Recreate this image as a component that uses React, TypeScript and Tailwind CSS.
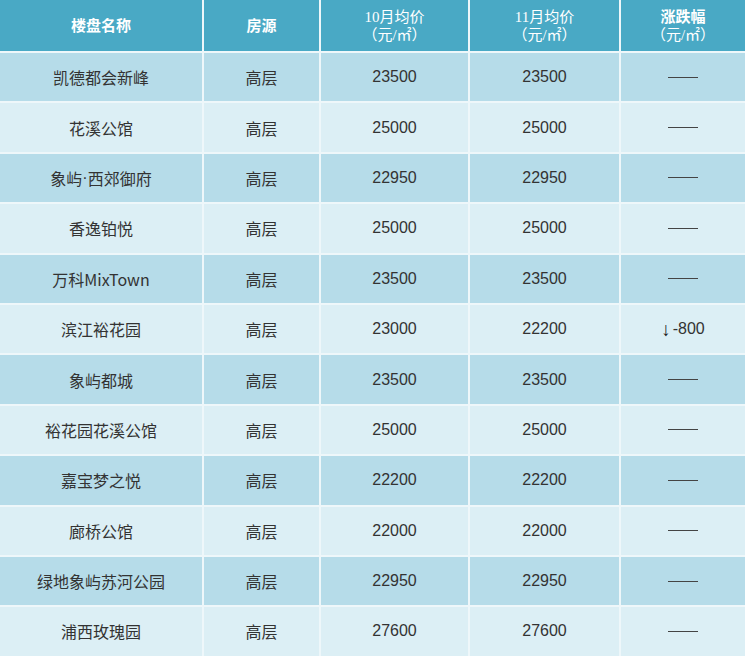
const rows = [
  { name: "凯德都会新峰", oct: "23500", nov: "23500", change: "" },
  { name: "花溪公馆", oct: "25000", nov: "25000", change: "" },
  { name: "象屿·西郊御府", oct: "22950", nov: "22950", change: "" },
  { name: "香逸铂悦", oct: "25000", nov: "25000", change: "" },
  { name: "万科MixTown", oct: "23500", nov: "23500", change: "" },
  { name: "滨江裕花园", oct: "23000", nov: "22200", change: "-800" },
  { name: "象屿都城", oct: "23500", nov: "23500", change: "" },
  { name: "裕花园花溪公馆", oct: "25000", nov: "25000", change: "" },
  { name: "嘉宝梦之悦", oct: "22200", nov: "22200", change: "" },
  { name: "廊桥公馆", oct: "22000", nov: "22000", change: "" },
  { name: "绿地象屿苏河公园", oct: "22950", nov: "22950", change: "" },
  { name: "浦西玫瑰园", oct: "27600", nov: "27600", change: "" },
];

const cell = "flex items-center justify-center h-[48.4px]";
const head = "flex items-center justify-center h-[51px] bg-[#49a9c5] text-white text-[15px]";

// names like 象屿·西郊御府 need a narrow dot, the CJK font draws it full width
function Name({ text }: { text: string }) {
  const parts = text.split("·");
  if (parts.length === 1) return <>{text}</>;
  return (
    <>
      {parts[0]}
      <span className="font-['Liberation_Sans',sans-serif]">·</span>
      {parts[1]}
    </>
  );
}

export default function App() {
  return (
    <div className="w-[745px] h-[659px] overflow-hidden bg-white font-['Noto_Sans_CJK_SC',sans-serif]">
      <div className="grid grid-cols-[202px_115px_147px_149px_1fr] gap-[2px] bg-[#eef7fa]">
        <div className={`${head} font-bold`}>楼盘名称</div>
        <div className={`${head} font-bold`}>房源</div>
        <div className={`${head} flex-col leading-[18px] font-['Liberation_Serif','Noto_Sans_CJK_SC',serif]`}>
          <span>10月均价</span>
          <span>（元/㎡）</span>
        </div>
        <div className={`${head} flex-col leading-[18px] font-['Liberation_Serif','Noto_Sans_CJK_SC',serif]`}>
          <span>11月均价</span>
          <span>（元/㎡）</span>
        </div>
        <div className={`${head} flex-col leading-[18px] font-['Liberation_Serif','Noto_Sans_CJK_SC',serif]`}>
          <span className="font-bold">涨跌幅</span>
          <span>（元/㎡）</span>
        </div>

        {rows.map((r, i) => {
          const bg = i % 2 === 0 ? "bg-[#b6dce9]" : "bg-[#dceff5]";
          return [
            <div key={r.name + "n"} className={`${cell} ${bg} text-[16px] text-[#333]`}>
              <Name text={r.name} />
            </div>,
            <div key={r.name + "t"} className={`${cell} ${bg} text-[16px] text-[#333]`}>高层</div>,
            <div key={r.name + "o"} className={`${cell} ${bg} text-[16px] text-[#333] font-['Liberation_Sans',sans-serif]`}>{r.oct}</div>,
            <div key={r.name + "v"} className={`${cell} ${bg} text-[16px] text-[#333] font-['Liberation_Sans',sans-serif]`}>{r.nov}</div>,
            <div key={r.name + "c"} className={`${cell} ${bg} text-[16px] text-[#333] font-['Liberation_Sans',sans-serif]`}>
              {r.change ? (
                <span className="flex items-center gap-[2px]">
                  <span className="text-[19px] leading-none text-[#222] font-bold">↓</span>
                  <span>{r.change}</span>
                </span>
              ) : (
                <span className="block w-[30px] h-px bg-[#444]" />
              )}
            </div>,
          ];
        })}
      </div>
    </div>
  );
}
